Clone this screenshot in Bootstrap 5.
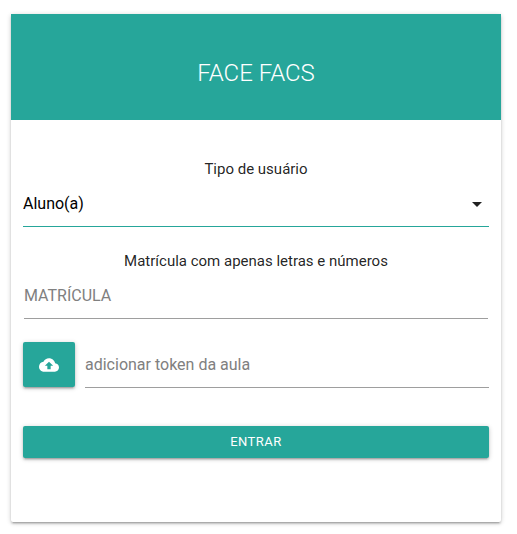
<!DOCTYPE html>
<html lang="pt-BR">
<head>
<meta charset="utf-8">
<meta name="viewport" content="width=device-width, initial-scale=1">
<title>FACE FACS</title>
<link href="https://cdn.jsdelivr.net/npm/bootstrap@5.3.0/dist/css/bootstrap.min.css" rel="stylesheet">
<style>
  :root { --teal: #26a69a; --lift: 0 2px 2px 0 rgba(0,0,0,.14), 0 3px 1px -2px rgba(0,0,0,.12), 0 1px 5px 0 rgba(0,0,0,.2); }
  body { font-family: Roboto, sans-serif; color: rgba(0,0,0,.87); background: #fff; }
  .page { padding: 14px 16px 12px 11px; }
  .login-card { border-radius: 2px; box-shadow: var(--lift); }
  .login-head { background: var(--teal); color: #fff; padding: 44px 12px 32px; }
  .login-head h1 { font-size: 24px; line-height: 30px; font-weight: 300; }
  .login-form { padding: 38px 12px 64px; }
  .field { margin-bottom: 23px; }
  .field-inset { padding: 0 1px; }
  .field-label { font-size: 15px; line-height: 23px; }
  .line-input { height: 46px; padding: 0; font-size: 16px; border: 0; border-bottom: 1px solid #9e9e9e; border-radius: 0; background-color: transparent; color: #000; }
  .line-input::placeholder { color: #808080; }
  .line-input:focus { border-color: var(--teal); box-shadow: none; }
  select.line-input { border-color: var(--teal); color: #000; }
  .caret { right: 0; width: 24px; height: 24px; }
  .teal-btn { --bs-btn-color: #fff; --bs-btn-bg: var(--teal); --bs-btn-hover-color: #fff; --bs-btn-hover-bg: #2bbbad; --bs-btn-active-color: #fff; --bs-btn-active-bg: #2bbbad; border: 0; border-radius: 2px; box-shadow: var(--lift); padding: 0; font-size: 13px; letter-spacing: .5px; }
  .upload-btn { width: 52px; height: 45px; }
  .submit-btn { height: 32px; margin-top: 38px; }
  .token-row { gap: 10px; }
</style>
</head>
<body>
<main class="page">
  <div class="card border-0 login-card">
    <div class="login-head text-center">
      <h1 class="mb-0">FACE FACS</h1>
    </div>
    <form class="login-form">
      <div class="field">
        <label class="field-label d-block text-center" for="tipo">Tipo de usuário</label>
        <div class="position-relative">
          <select class="form-control line-input" id="tipo">
            <option>Aluno(a)</option>
            <option>Professor(a)</option>
          </select>
          <svg class="caret position-absolute top-50 translate-middle-y pe-none" viewBox="0 0 24 24" fill="currentColor" aria-hidden="true"><path d="M7 10l5 5 5-5z"/></svg>
        </div>
      </div>
      <div class="field field-inset">
        <label class="field-label d-block text-center" for="matricula">Matrícula com apenas letras e números</label>
        <input class="form-control line-input" id="matricula" type="text" placeholder="MATRÍCULA">
      </div>
      <div class="d-flex token-row">
        <button class="btn teal-btn upload-btn d-flex align-items-center justify-content-center flex-shrink-0" type="button" aria-label="Enviar token">
          <svg width="20" height="20" viewBox="0 0 24 24" fill="currentColor" aria-hidden="true"><path d="M19.35 10.04C18.67 6.59 15.64 4 12 4 9.11 4 6.6 5.64 5.35 8.04 2.34 8.36 0 10.91 0 14c0 3.31 2.69 6 6 6h13c2.76 0 5-2.24 5-5 0-2.64-2.05-4.78-4.65-4.96zM14 13v4h-4v-4H7l5-5 5 5h-3z"/></svg>
        </button>
        <input class="form-control line-input" type="text" placeholder="adicionar token da aula" aria-label="Token da aula">
      </div>
      <button class="btn teal-btn submit-btn w-100" type="submit">ENTRAR</button>
    </form>
  </div>
</main>
<script src="https://cdn.jsdelivr.net/npm/bootstrap@5.3.0/dist/js/bootstrap.bundle.min.js"></script>
</body>
</html>
